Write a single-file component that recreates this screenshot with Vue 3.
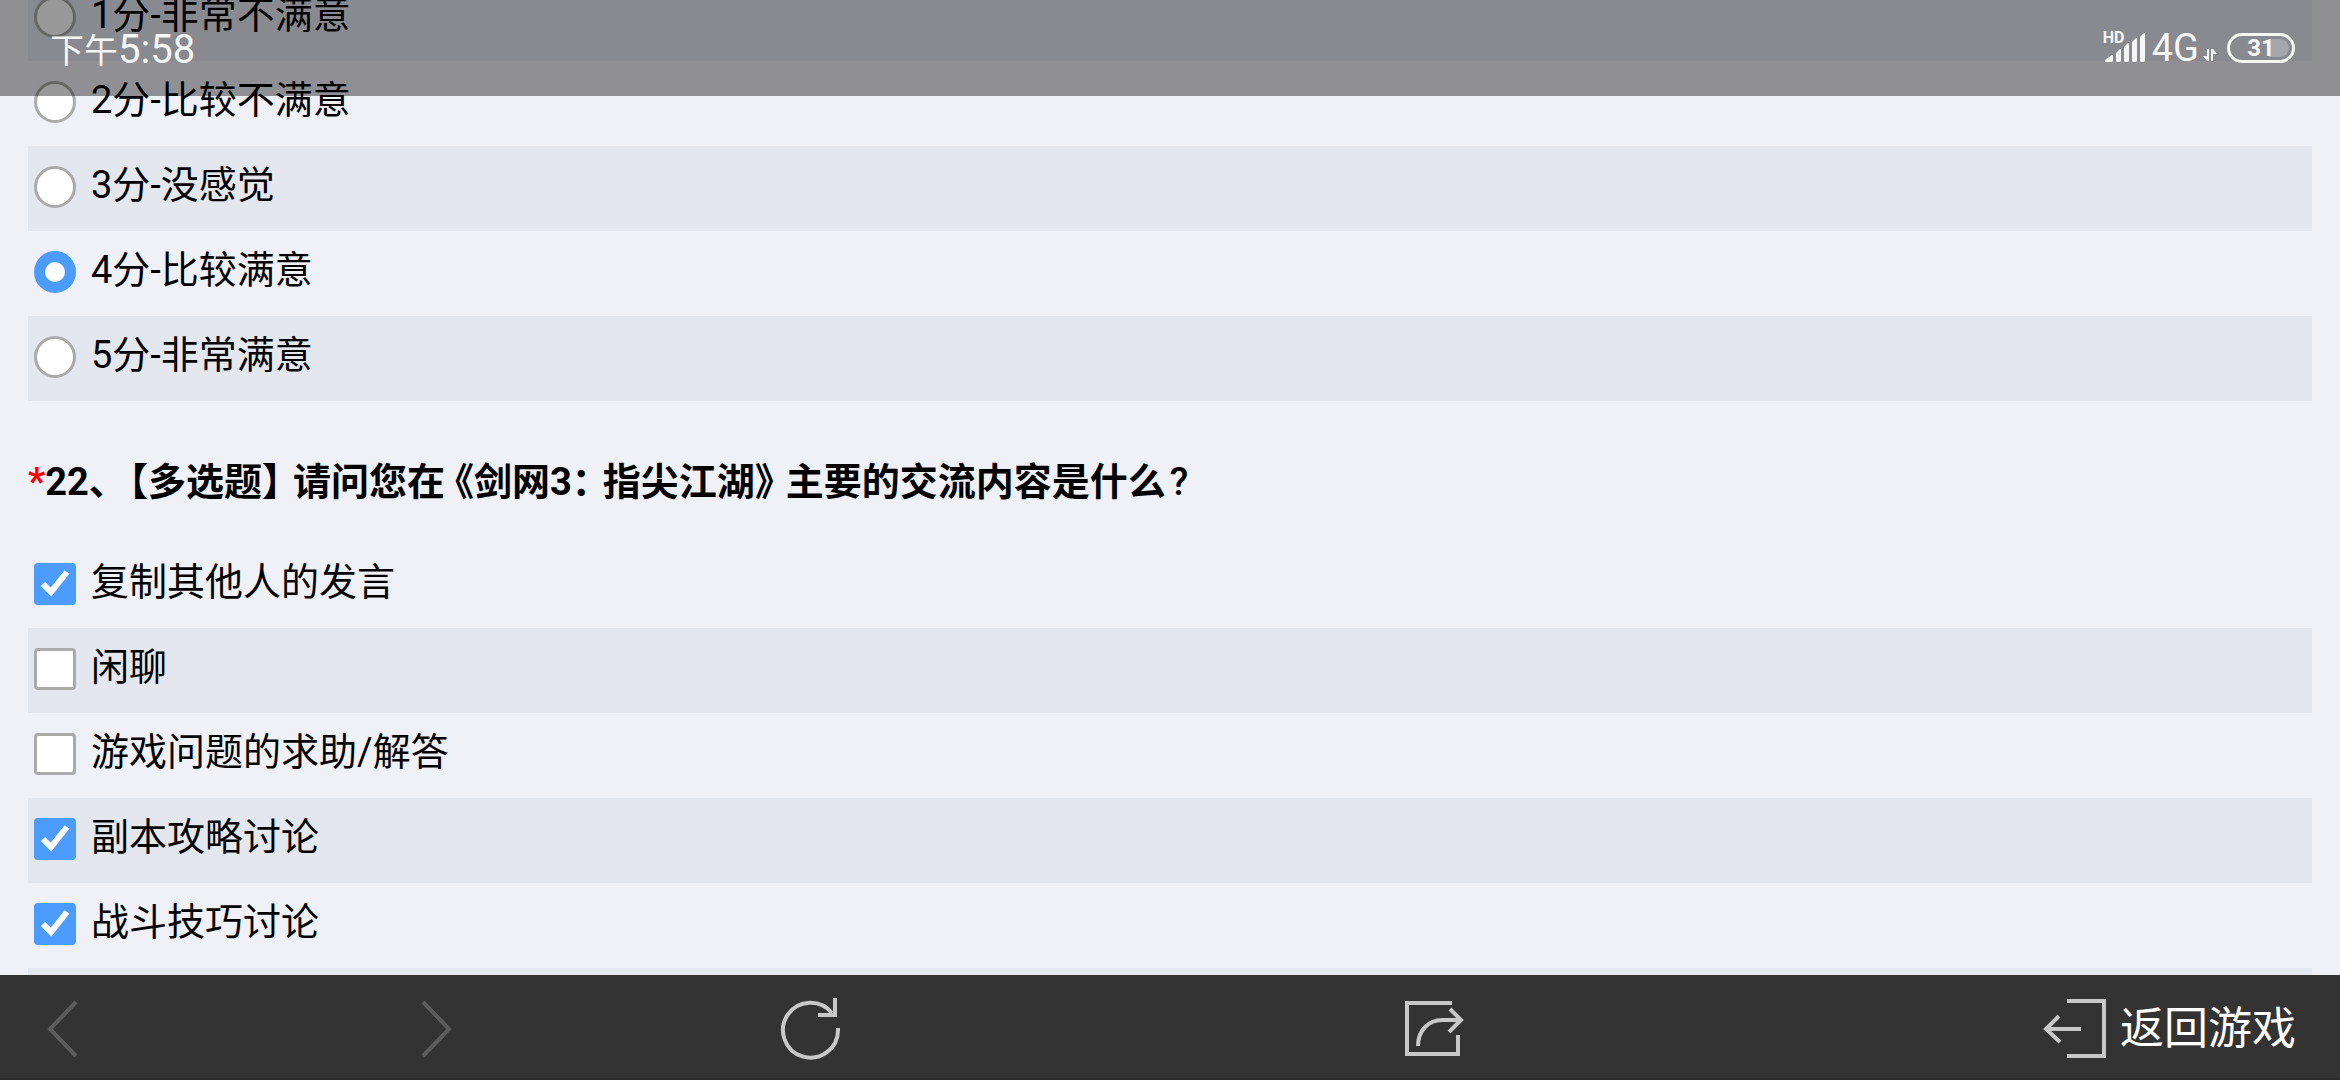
<script setup>
import { ref } from 'vue'

const scores = [
  { value: 1, label: '1分-非常不满意' },
  { value: 2, label: '2分-比较不满意' },
  { value: 3, label: '3分-没感觉' },
  { value: 4, label: '4分-比较满意' },
  { value: 5, label: '5分-非常满意' },
]
const score = ref(4)

const topics = [
  { value: 'copy', label: '复制其他人的发言' },
  { value: 'chat', label: '闲聊' },
  { value: 'help', label: '游戏问题的求助/解答' },
  { value: 'raid', label: '副本攻略讨论' },
  { value: 'battle', label: '战斗技巧讨论' },
]
const chosen = ref(['copy', 'raid', 'battle'])
</script>

<template>
  <div class="page">
    <header class="status">
      <div class="time"><span class="period">下午</span>5:58</div>
      <div class="indicators">
        <div class="signal">
          <span class="hd">HD</span>
          <svg width="42" height="30" viewBox="0 0 42 30" fill="currentColor">
            <path d="M1 29V27L8 22H9V28L8 29H2Z" />
            <path d="M12 20L16 16H17V28L16 29H13L12 28Z" />
            <path d="M20 14L24 10H25V28L24 29H21L20 28Z" />
            <path d="M28 9L32 5H33V28L32 29H29L28 28Z" />
            <path d="M36 4L40 0H41V28L40 29H37L36 28Z" />
          </svg>
        </div>
        <span class="network">4G</span>
        <svg class="traffic" width="14" height="14" viewBox="0 0 14 14" fill="currentColor">
          <path d="M4 1H6V13H4L0 8H4ZM8 13V1H10L14 6H10V13Z" />
        </svg>
        <div class="battery"><span>31</span></div>
      </div>
    </header>

    <main class="survey">
      <div class="scroll">
        <ul class="options">
          <li v-for="s in scores" :key="s.value">
            <label>
              <input v-model="score" type="radio" name="score" :value="s.value" />
              <span>{{ s.label }}</span>
            </label>
          </li>
        </ul>
        <h2>
          <span class="required">*</span>22、<span class="open">【</span>多选题<span class="close">】</span>请问您在<span class="open wide">《</span>剑网3<span class="colon">：</span>指尖江湖<span class="close">》</span>主要的交流内容是什么<span class="mark">?</span>
        </h2>
        <ul class="options even">
          <li v-for="t in topics" :key="t.value">
            <label>
              <input v-model="chosen" type="checkbox" :value="t.value" />
              <span>{{ t.label }}</span>
            </label>
          </li>
          <li></li>
        </ul>
      </div>
    </main>

    <nav class="toolbar">
      <button type="button" class="dim" aria-label="后退">
        <svg width="64" height="64" viewBox="0 0 64 64"><path d="M46 5L20 32L46 59" /></svg>
      </button>
      <button type="button" class="dim" aria-label="前进">
        <svg width="64" height="64" viewBox="0 0 64 64"><path d="M19 5L45 32L19 59" /></svg>
      </button>
      <button type="button" aria-label="刷新">
        <svg width="64" height="64" viewBox="0 0 64 64">
          <path d="M60 31V33A27.5 27.5 0 1 1 54 16" />
          <path d="M57 1V18H40" />
        </svg>
      </button>
      <button type="button" aria-label="分享">
        <svg width="64" height="64" viewBox="0 0 64 64">
          <path d="M50 6H5V57H56V38" />
          <path d="M16 49C16 33 27 23 40 23H58" />
          <path d="M48 12L59 23L47 35" />
        </svg>
      </button>
      <button type="button" class="exit">
        <svg width="64" height="64" viewBox="0 0 64 64">
          <path d="M25 4H62V59H25" />
          <path d="M39 32H3" />
          <path d="M17 19L4 32L18 45" />
        </svg>
        返回游戏
      </button>
    </nav>
  </div>
</template>

<style>
body {
  margin: 0;
}
</style>

<style scoped>
.page {
  position: relative;
  display: flex;
  flex-direction: column;
  height: 100vh;
  overflow: hidden;
  background: #f0f1f7;
  color: #000;
  font-family: Roboto, "Noto Sans CJK SC", sans-serif;
}

.status {
  position: absolute;
  inset: 0 0 auto;
  z-index: 1;
  display: flex;
  justify-content: space-between;
  box-sizing: border-box;
  height: 96px;
  padding: 0 45px 0 50px;
  background: rgba(0, 0, 0, 0.4);
  color: #f6f6f6;
}

.time {
  line-height: 100px;
  font-size: 40px;
}

.period {
  font-size: 34px;
}

.indicators {
  display: flex;
  align-items: center;
  height: 96px;
}

.signal {
  position: relative;
  margin-right: 6px;
}

.signal svg,
.traffic {
  display: block;
}

.hd {
  position: absolute;
  top: -2px;
  left: -1px;
  line-height: 14px;
  font-size: 16px;
  font-weight: 700;
}

.network {
  font-size: 38px;
  line-height: 100px;
}

.traffic {
  margin: 14px 10px 0 4px;
}

.battery {
  position: relative;
  display: flex;
  align-items: center;
  justify-content: center;
  box-sizing: border-box;
  width: 68px;
  height: 30px;
  border: 3px solid #f6f6f6;
  border-radius: 15px;
  font-size: 24px;
  font-weight: 700;
}

.battery::before {
  content: "";
  position: absolute;
  inset: 3px 3px 3px auto;
  width: 20px;
  border-radius: 0 9px 9px 0;
  background: rgba(255, 255, 255, 0.25);
}

.battery span {
  position: relative;
}

.survey {
  flex: 1;
  min-height: 0;
  overflow: hidden;
}

.scroll {
  margin: -24px 28px 0;
}

.options {
  margin: 0;
  padding: 0;
  list-style: none;
}

.options li {
  height: 85px;
}

.options li:nth-child(odd) {
  background: #e4e7ee;
}

.options.even li:nth-child(odd) {
  background: none;
}

.options.even li:nth-child(even) {
  background: #e4e7ee;
}

label {
  display: flex;
  align-items: center;
  gap: 15px;
  box-sizing: border-box;
  height: 100%;
  padding: 0 0 4px 6px;
  font-size: 38px;
  line-height: 56px;
}

label span {
  padding-bottom: 4px;
}

input {
  appearance: none;
  box-sizing: border-box;
  width: 42px;
  height: 42px;
  margin: 0;
  border: 3px solid #aaa;
  border-radius: 4px;
  background: #fff;
}

input[type="radio"] {
  border-radius: 50%;
}

input[type="radio"]:checked {
  border: 11px solid #4c9bff;
}

input[type="checkbox"]:checked {
  border: 0;
  background: #4c9bff url("data:image/svg+xml,%3Csvg xmlns='http://www.w3.org/2000/svg' viewBox='0 0 42 42'%3E%3Cpath d='M9 21l8 8L33 9' fill='none' stroke='white' stroke-width='6'/%3E%3C/svg%3E") center / 42px;
}

h2 {
  margin: 0;
  padding: 52px 0 32px;
  font-size: 38px;
  font-weight: 700;
  line-height: 58px;
}

.required {
  color: #f00;
}

.open,
.close,
.colon {
  font-feature-settings: "halt";
}

.open {
  padding-left: 2px;
}

.open.wide {
  padding-left: 10px;
}

.close {
  padding-right: 12px;
}

.colon {
  padding-right: 12px;
}

.mark {
  padding-left: 4px;
  font-weight: 500;
}

.toolbar {
  display: grid;
  grid-template-columns: 374fr 374fr 624fr 640fr auto;
  align-items: center;
  justify-items: start;
  box-sizing: border-box;
  height: 105px;
  padding: 4px 44px 0 30px;
  border-bottom: 2px solid #2c2c2c;
  background: #333;
}

button {
  display: flex;
  align-items: center;
  gap: 14px;
  padding: 0;
  border: 0;
  background: none;
  color: #fff;
  font: inherit;
  font-size: 44px;
  line-height: 64px;
}

button svg {
  fill: none;
  stroke: #c8c8c8;
  stroke-width: 4;
}

.exit {
  line-height: 68px;
}

.dim svg {
  stroke: #5c5c5c;
}
</style>
